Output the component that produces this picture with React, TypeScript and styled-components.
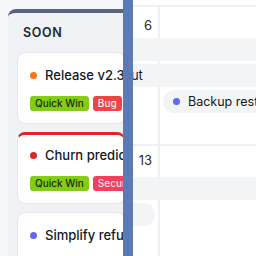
import styled, { createGlobalStyle } from "styled-components";

const GlobalStyle = createGlobalStyle`
  html, body {
    margin: 0;
    padding: 0;
    width: 256px;
    height: 256px;
    overflow: hidden;
    background: #f6f7fa;
    font-family: Inter, "Noto Sans", sans-serif;
  }
`;

const Page = styled.div`
  display: flex;
  width: 256px;
  height: 256px;
  overflow: hidden;
`;

const Sidebar = styled.div`
  flex: 0 0 123px;
  padding: 9px 0 0 8px;
  box-sizing: border-box;
  overflow: hidden;
  background: #f6f7fa;
`;

const Column = styled.section`
  width: 124px;
  height: 260px;
  box-sizing: border-box;
  padding: 0 7px 0 9px;
  background: #f1f2f5;
  border-top: 4px solid #56657d;
  border-radius: 8px 8px 0 0;
`;

const ColumnTitle = styled.h2`
  margin: 0;
  padding: 12px 6px 11px;
  font-size: 12.5px;
  line-height: 16px;
  font-weight: 600;
  letter-spacing: 0.6px;
  color: #1f2937;
`;

const CardList = styled.div`
  display: flex;
  flex-direction: column;
  gap: 8px;
`;

const Card = styled.div<{ $accent?: string }>`
  display: flex;
  flex-direction: column;
  gap: 11px;
  padding: ${(p) => (p.$accent ? "10px" : "12px")} 12px 12px;
  background: #fff;
  border: 1px solid #e5e7eb;
  border-top: ${(p) => (p.$accent ? `3px solid ${p.$accent}` : "1px solid #e5e7eb")};
  border-radius: 8px;
  white-space: nowrap;
`;

const TitleRow = styled.div`
  display: flex;
  align-items: center;
  gap: 8px;
  height: 20px;
`;

const Dot = styled.span<{ $color: string }>`
  flex: 0 0 7px;
  width: 7px;
  height: 7px;
  border-radius: 50%;
  background: ${(p) => p.$color};
`;

const CardTitle = styled.span`
  font-size: 13px;
  line-height: 20px;
  font-weight: 500;
  color: #111827;
`;

const Tags = styled.div`
  display: flex;
  gap: 4px;
`;

const Tag = styled.span<{ $bg: string; $fg: string }>`
  padding: 0 5px;
  height: 15px;
  line-height: 15px;
  font-size: 10px;
  font-weight: 500;
  border-radius: 3px;
  background: ${(p) => p.$bg};
  color: ${(p) => p.$fg};
`;

const Handle = styled.div`
  flex: 0 0 10px;
  background: #5a7bb5;
`;

const Calendar = styled.div`
  flex: 1;
  overflow: hidden;
  background: #fff;
  padding-top: 5px;
`;

const Weeks = styled.div`
  margin-left: -133px;
  width: 320px;
`;

const Week = styled.div`
  display: grid;
  grid-template-columns: repeat(2, 160px);
  grid-template-rows: 28px;
  grid-auto-rows: 23px;
  row-gap: 3px;
  align-content: start;
  height: 139px;
  box-sizing: border-box;
  border-top: 2px solid #eef0f3;
  background-image: linear-gradient(
    to right,
    transparent 158px,
    #eef0f3 158px,
    #eef0f3 160px,
    transparent 160px
  );
  background-size: 160px 100%;
`;

const DayNum = styled.div<{ $pad: number }>`
  grid-row: 1;
  padding: ${(p) => p.$pad}px 8px 0;
  text-align: right;
  font-size: 13px;
  line-height: 16px;
  color: #1f2937;
`;

const Band = styled.div`
  grid-column: 1 / -1;
  padding-left: 22px;
  background: #f3f4f6;
  font-size: 13px;
  line-height: 23px;
  color: #111827;
  white-space: nowrap;
`;

const Chip = styled.div<{ $col: number }>`
  grid-column: ${(p) => p.$col};
  display: flex;
  align-items: center;
  gap: 8px;
  margin: 0 5px 0 3px;
  padding: 0 10px;
  border-radius: 12px;
  background: #f3f4f6;
  font-size: 12.5px;
  color: #111827;
  white-space: nowrap;
  overflow: hidden;
`;

const cards = [
  {
    title: "Release v2.3",
    dot: "#f97316",
    tags: [
      { label: "Quick Win", bg: "#84cc16", fg: "#1a2e05" },
      { label: "Bug", bg: "#ef4444", fg: "#fff1f2" },
    ],
  },
  {
    title: "Churn prediction",
    dot: "#dc2626",
    accent: "#dc2626",
    tags: [
      { label: "Quick Win", bg: "#84cc16", fg: "#1a2e05" },
      { label: "Security", bg: "#f43f5e", fg: "#ffe4e6" },
    ],
  },
  {
    title: "Simplify refunds",
    dot: "#6366f1",
    tags: [{ label: "Docs", bg: "#e0e7ff", fg: "#3730a3" }],
  },
];

export default function App() {
  return (
    <>
      <GlobalStyle />
      <Page>
        <Sidebar>
          <Column>
            <ColumnTitle>SOON</ColumnTitle>
            <CardList>
              {cards.map((c) => (
                <Card key={c.title} $accent={c.accent}>
                  <TitleRow>
                    <Dot $color={c.dot} />
                    <CardTitle>{c.title}</CardTitle>
                  </TitleRow>
                  <Tags>
                    {c.tags.map((t) => (
                      <Tag key={t.label} $bg={t.bg} $fg={t.fg}>
                        {t.label}
                      </Tag>
                    ))}
                  </Tags>
                </Card>
              ))}
            </CardList>
          </Column>
        </Sidebar>
        <Handle />
        <Calendar>
          <Weeks>
            <Week>
              <DayNum $pad={10}>6</DayNum>
              <DayNum $pad={10}>7</DayNum>
              <Band />
              <Band>Release v2.3 rollout</Band>
              <Chip $col={2}>
                <Dot $color="#6366f1" />
                Backup restore drill
              </Chip>
            </Week>
            <Week>
              <DayNum $pad={6}>13</DayNum>
              <DayNum $pad={6}>14</DayNum>
              <Band />
              <Chip $col={1}>
                <Dot $color="#0ea5e9" />
                Sprint review
              </Chip>
            </Week>
          </Weeks>
        </Calendar>
      </Page>
    </>
  );
}
